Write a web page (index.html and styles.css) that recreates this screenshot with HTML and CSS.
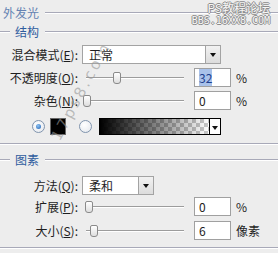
FILE: index.html
```html
<!DOCTYPE html>
<html lang="zh-CN">
<head>
    <meta charset="UTF-8">
    <title>外发光</title>
    <link rel="stylesheet" href="styles.css">
</head>
<body>
    <div class="panel">
        <div class="head">
            <span class="name">外发光</span>
            <i class="rule"></i>
        </div>
        <div class="legend">
            <i class="lead"></i><span>结构</span><i class="rule"></i>
        </div>

        <div class="row r-blend">
            <label>混合模式(<u>E</u>):</label>
            <div class="select wide"><span>正常</span><b class="drop"></b></div>
        </div>
        <div class="row r-opacity">
            <label>不透明度(<u>O</u>):</label>
            <div class="slider"><i class="thumb" style="left: 29px"></i></div>
            <span class="num"><em>32</em></span><span class="unit">%</span>
        </div>
        <div class="row r-noise">
            <label>杂色(<u>N</u>):</label>
            <div class="slider"><i class="thumb" style="left: -1px"></i></div>
            <span class="num">0</span><span class="unit">%</span>
        </div>
        <div class="row r-color">
            <i class="radio on"></i>
            <i class="swatch"></i>
            <i class="radio"></i>
            <div class="gradient"><span class="ramp"></span><b class="drop"></b></div>
        </div>

        <div class="sep"></div>
        <div class="legend l-2">
            <i class="lead"></i><span>图素</span><i class="rule"></i>
        </div>

        <div class="row r-method">
            <label>方法(<u>Q</u>):</label>
            <div class="select short"><span>柔和</span><b class="drop"></b></div>
        </div>
        <div class="row r-spread">
            <label>扩展(<u>P</u>):</label>
            <div class="slider"><i class="thumb" style="left: 1px"></i></div>
            <span class="num">0</span><span class="unit">%</span>
        </div>
        <div class="row r-size">
            <label>大小(<u>S</u>):</label>
            <div class="slider"><i class="thumb" style="left: 6px"></i></div>
            <span class="num">6</span><span class="unit">像素</span>
        </div>
        <div class="sep bottom"></div>

        <!-- watermarks over the dialog -->
        <div class="stamp">
            <span class="cn">PS教程论坛</span>
            <span class="site">BBS.16XX8.COM</span>
        </div>
        <div class="diag">17ps8.com</div>
    </div>
</body>
</html>
```

FILE: styles.css
```css
body {
    margin: 0;
    background: #ededed;
    font-family: "Noto Sans CJK SC", "Liberation Sans", sans-serif;
    font-size: 12px;
    color: #1e1e1e;
}
.panel {
    position: relative;
    width: 278px;
    height: 253px;
    overflow: hidden;
}
u {
    text-decoration: underline;
}

/* group titles */
.head {
    display: flex;
    align-items: center;
    height: 25px;
}
.head .name {
    margin: 0 6px 0 3px;
    color: #6482b2;
    font-size: 12px;
    line-height: 14px;
}
.rule {
    flex: 1;
    height: 1px;
    background: #a8a9b8;
    border-bottom: 1px solid #fff;
}
.legend {
    display: flex;
    align-items: center;
    height: 14px;
    color: #2f5c9e;
}
.legend .lead {
    width: 10px;
    height: 1px;
    background: #a8a9b8;
    border-bottom: 1px solid #fff;
}
.legend span {
    margin: 0 6px 0 5px;
    line-height: 14px;
}
.l-2 {
    margin-top: 8px;
}
.sep {
    margin-top: 8px;
    height: 1px;
    background: #a8a9b8;
    border-bottom: 1px solid #fff;
}
.sep.bottom {
    margin-top: 7px;
}

/* rows */
.row {
    display: flex;
    align-items: center;
    height: 19px;
}
.row label {
    width: 78px;
    margin-right: 4px;
    text-align: right;
    white-space: nowrap;
    line-height: 14px;
}
.r-blend { margin-top: 6px; }
.r-opacity { margin-top: 4px; }
.r-noise { margin-top: 4px; }
.r-color { margin-top: 7px; height: 18px; padding-left: 32px; }
.r-method { margin-top: 9px; }
.r-spread { margin-top: 2px; }
.r-size { margin-top: 5px; }

.select {
    display: flex;
    height: 19px;
    box-sizing: border-box;
    background: #fff;
    border: 1px solid #a3a3a3;
}
.select span {
    flex: 1;
    padding-left: 6px;
    line-height: 17px;
}
.select.wide { width: 139px; }
.select.short { width: 72px; }
.drop {
    position: relative;
    width: 14px;
    background: linear-gradient(#f2f2f2, #dcdcdc);
    border-left: 1px solid #a3a3a3;
}
.drop::after {
    content: "";
    position: absolute;
    left: 4px;
    top: 7px;
    border-left: 3px solid transparent;
    border-right: 3px solid transparent;
    border-top: 4px solid #111;
}

.slider {
    position: relative;
    width: 100px;
    height: 19px;
    margin-left: 2px;
}
.slider::before {
    content: "";
    position: absolute;
    left: 2px;
    right: 0;
    top: 9px;
    height: 1px;
    background: #9c9c9c;
    border-bottom: 1px solid #fff;
}
.thumb {
    position: absolute;
    top: 4px;
    width: 6px;
    height: 10px;
    border: 1px solid #8a8a8a;
    border-radius: 2px 2px 3px 3px;
    background: linear-gradient(#ffffff, #dedede);
}
.num {
    width: 37px;
    height: 19px;
    margin-left: 10px;
    box-sizing: border-box;
    padding-left: 4px;
    background: #fff;
    border: 1px solid #a0a0a0;
    line-height: 17px;
}
.num em {
    font-style: normal;
    background: #a9c2ea;
    color: #1d3f8e;
}
.unit {
    margin-left: 5px;
}

/* colour / gradient choice */
.radio {
    width: 11px;
    height: 11px;
    border: 1px solid #8094ad;
    border-radius: 50%;
    background: radial-gradient(circle at 40% 35%, #ffffff, #e2e6ec);
    position: relative;
}
.radio.on::after {
    content: "";
    position: absolute;
    left: 3px;
    top: 3px;
    width: 5px;
    height: 5px;
    border-radius: 50%;
    background: radial-gradient(circle at 40% 35%, #8fc4f4, #1d5fb2);
}
.swatch {
    width: 14px;
    height: 15px;
    margin: 0 13px 0 5px;
    background: #000;
    border: 1px solid #666;
}
.gradient {
    display: flex;
    width: 122px;
    height: 17px;
    margin-left: 7px;
    box-sizing: border-box;
    border: 1px solid #000;
}
.ramp {
    flex: 1;
    background:
        linear-gradient(to right, #000, rgba(0, 0, 0, 0)),
        conic-gradient(#c8c8c8 25%, #fff 0 50%, #c8c8c8 0 75%, #fff 0) 0 0 / 8px 8px;
}
.gradient .drop {
    width: 10px;
    background: #fff;
    border-left: 1px solid #000;
}
.gradient .drop::after {
    left: 2px;
}

/* watermarks */
.stamp {
    position: absolute;
    right: 8px;
    top: 1px;
    display: flex;
    flex-direction: column;
    align-items: flex-end;
    color: #f6f6f6;
    text-shadow: 1px 0 #8c8c8c, -1px 0 #8c8c8c, 0 1px #8c8c8c, 0 -1px #8c8c8c;
}
.stamp .cn {
    font-size: 12px;
    line-height: 14px;
}
.stamp .site {
    font-family: "DejaVu Sans Mono", monospace;
    font-size: 10px;
    line-height: 12px;
}
.diag {
    position: absolute;
    left: 81px;
    top: 91px;
    transform: translate(-50%, -50%) rotate(-62deg);
    font-family: "DejaVu Sans", sans-serif;
    font-size: 15px;
    letter-spacing: 3px;
    color: rgba(150, 150, 150, 0.6);
    white-space: nowrap;
}
```
